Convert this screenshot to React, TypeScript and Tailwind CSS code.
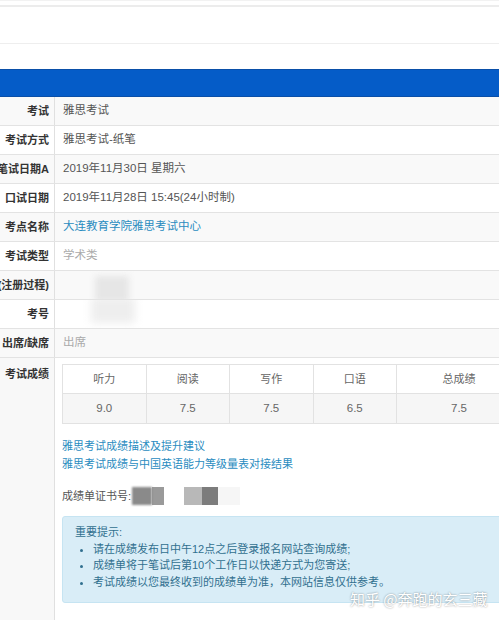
const rows: { label: string; value: React.ReactNode }[] = [
    { label: "考试", value: <span className="text-[#555]">雅思考试</span> },
    { label: "考试方式", value: <span className="text-[#555]">雅思考试-纸笔</span> },
    { label: "笔试日期A", value: <span className="text-[#555]">2019年11月30日 星期六</span> },
    { label: "口试日期", value: <span className="text-[#555]">2019年11月28日 15:45(24小时制)</span> },
    { label: "考点名称", value: <span className="text-[#2a8cbf]">大连教育学院雅思考试中心</span> },
    { label: "考试类型", value: <span className="text-[#aaa]">学术类</span> },
    { label: "(注册过程)", value: <span className="block w-[34px] h-[26px] bg-[#e6e6e6] blur-[3px] ml-[32px] mt-[8px]" /> },
    { label: "考号", value: <span className="block w-[44px] h-[26px] bg-[#eeeeee] blur-[4px] ml-[28px] -mt-[8px]" /> },
    { label: "出席/缺席", value: <span className="text-[#aaa]">出席</span> },
];

const scores = [
    { name: "听力", score: "9.0" },
    { name: "阅读", score: "7.5" },
    { name: "写作", score: "7.5" },
    { name: "口语", score: "6.5" },
    { name: "总成绩", score: "7.5" },
];

export default function App() {
    return (
        <div className="relative w-[499px] h-[620px] overflow-hidden bg-white text-[11px] font-['Helvetica','Liberation_Sans','Noto_Sans_CJK_SC',sans-serif]">

            {/* top header strip */}
            <div className="h-[5px] border-t border-[#f2f2f2]" />
            <div className="h-[38px] border-t-2 border-[#ececec]" />
            <div className="h-[26px] border-t border-[#eeeeee]" />

            {/* blue bar */}
            <div className="h-[28px] bg-[#055cc8] border-y border-[#0a4fa8]" />

            {/* info table */}
            <div>
                {rows.map((row, i) => (
                    <div
                        key={row.label}
                        className={`flex h-[29px] border-b border-[#e3e3e3] ${i % 2 === 0 ? "bg-[#f9f9f9]" : "bg-white"}`}
                    >
                        <div className="w-[55px] shrink-0 flex justify-end items-center pr-[5px] overflow-hidden whitespace-nowrap border-r border-[#e0e0e0] font-bold text-[#333]">
                            {row.label}
                        </div>
                        <div className="flex-1 flex items-center pl-[8px] whitespace-nowrap overflow-hidden text-[11.5px]">
                            {row.value}
                        </div>
                    </div>
                ))}

                {/* scores row */}
                <div className="flex">
                    <div className="w-[55px] shrink-0 flex justify-end pt-[8px] pr-[5px] h-[300px] bg-[#f8f8f8] border-r border-[#e0e0e0] font-bold text-[#333] whitespace-nowrap">
                        考试成绩
                    </div>
                    <div className="flex-1 pl-[7px] pt-[6px] overflow-hidden">

                        <div className="flex w-[460px] border border-[#e2e2e2] text-[#666]">
                            {scores.map((s, i) => (
                                <div key={s.name} className={`flex flex-col ${i < 4 ? "w-[83.5px] border-r border-[#e2e2e2]" : "flex-1"}`}>
                                    <div className="h-[29px] flex items-center justify-center border-b border-[#e2e2e2]">{s.name}</div>
                                    <div className="h-[29px] flex items-center justify-center bg-[#f6f6f6] text-[11.5px]">{s.score}</div>
                                </div>
                            ))}
                        </div>

                        <div className="mt-[13px] leading-[18px] text-[#2a8cbf]">
                            <p>雅思考试成绩描述及提升建议</p>
                            <p>雅思考试成绩与中国英语能力等级量表对接结果</p>
                        </div>

                        <div className="mt-[14px] flex items-center h-[18px] text-[#555]">
                            <span>成绩单证书号:</span>
                            <span className="block w-[20px] h-[18px] bg-[#8a8a8a] blur-[1px] ml-[1px]" />
                            <span className="block w-[12px] h-[18px] bg-[#9a9a9a]" />
                            <span className="block w-[20px] h-[18px]" />
                            <span className="block w-[18px] h-[18px] bg-[#b8b8b8]" />
                            <span className="block w-[16px] h-[18px] bg-[#7c7c7c]" />
                            <span className="block w-[22px] h-[18px] bg-[#f6f6f6]" />
                        </div>

                        <div className="mt-[11px] w-[460px] rounded-[3px] bg-[#d9edf7] border border-[#c6e4f2] px-[12px] pt-[7px] pb-[12px] text-[#31708f] leading-[16.5px]">
                            <p>重要提示:</p>
                            <ul className="list-disc pl-[18px]">
                                <li>请在成绩发布日中午12点之后登录报名网站查询成绩;</li>
                                <li>成绩单将于笔试后第10个工作日以快递方式为您寄送;</li>
                                <li>考试成绩以您最终收到的成绩单为准，本网站信息仅供参考。</li>
                            </ul>
                        </div>
                    </div>
                </div>
            </div>

            {/* watermark */}
            <div className="absolute left-[350px] top-[588px] text-[15px] text-white whitespace-nowrap [text-shadow:0_0_2px_rgba(0,0,0,0.45)] font-['Noto_Sans_CJK_SC',sans-serif]">
                知乎 @奔跑的玄三藏
            </div>
        </div>
    );
}
